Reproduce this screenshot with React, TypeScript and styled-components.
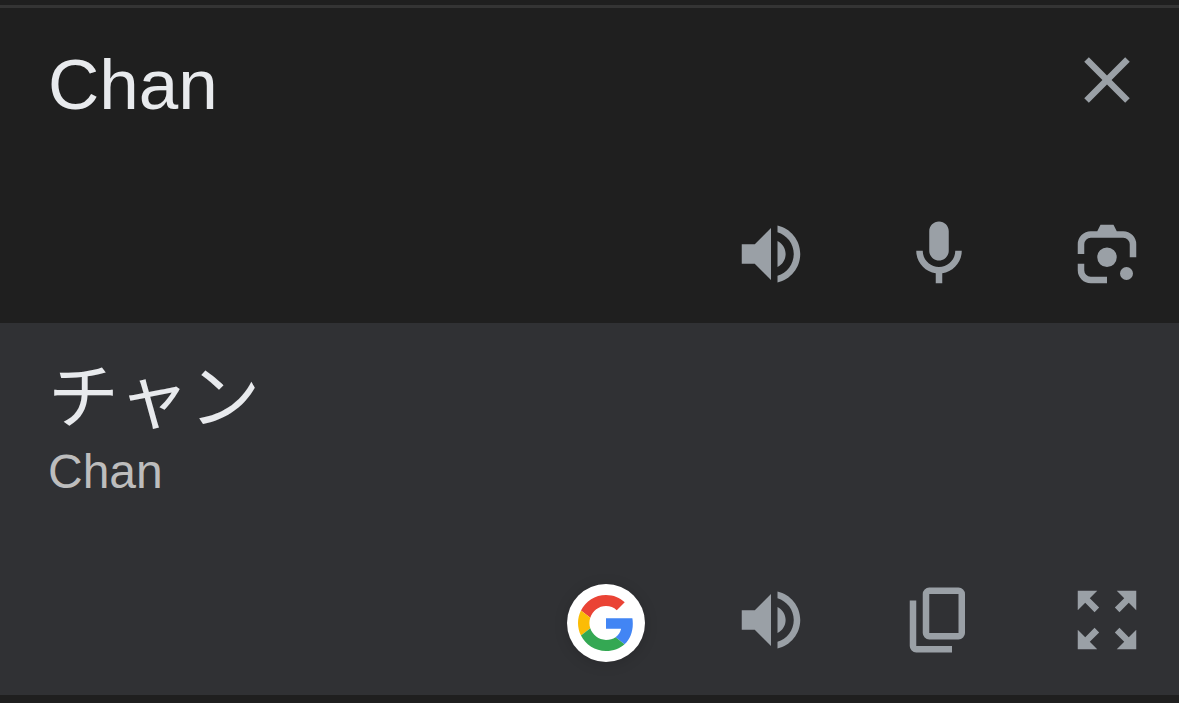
import React, { useState } from "react";
import styled, { createGlobalStyle } from "styled-components";

const GlobalStyle = createGlobalStyle`
  *, *::before, *::after { box-sizing: border-box; }
  body {
    margin: 0;
    background: #1f1f1f;
    font-family: "Liberation Sans", Arial, sans-serif;
  }
`;

const Page = styled.main`
  padding: 5px 0 8px;
`;

const SourcePanel = styled.section`
  display: flex;
  flex-direction: column;
  gap: 86px;
  padding: 33px 33px 30px 48px;
  border-top: 3px solid #343434;
`;

const ResultPanel = styled.section`
  display: flex;
  flex-direction: column;
  gap: 73px;
  padding: 20px 33px 33px 48px;
  background: #303134;
`;

const InputRow = styled.div`
  display: flex;
  align-items: flex-start;
  gap: 24px;
`;

const SourceInput = styled.input`
  flex: 1;
  min-width: 0;
  height: 88px;
  padding: 0;
  border: 0;
  outline: 0;
  background: transparent;
  color: #e8eaed;
  font: 71px/88px "Liberation Sans", Arial, sans-serif;
`;

const Toolbar = styled.div`
  display: flex;
  align-items: center;
  justify-content: flex-end;
  gap: 87px;
`;

const Actions = styled.div`
  display: flex;
  gap: 90px;
`;

const IconButton = styled.button`
  display: block;
  flex: none;
  width: 78px;
  height: 78px;
  padding: 0;
  border: 0;
  background: transparent;
  color: #9aa0a6;
  cursor: pointer;

  svg {
    display: block;
    width: 100%;
    height: 100%;
    fill: currentColor;
  }
`;

const BrandSlot = styled.div`
  padding-top: 6px;
`;

const BrandButton = styled(IconButton)`
  padding: 11px;
  border-radius: 50%;
  background: #fff;
  box-shadow: 0 2px 14px rgba(0, 0, 0, 0.15);
`;

const Translation = styled.p`
  margin: 0;
  color: #e8eaed;
  font: 71px/96px "Noto Sans CJK JP", sans-serif;
`;

const Romanization = styled.p`
  margin: 0;
  color: #bdbdbd;
  font-size: 48px;
  line-height: 66px;
`;

const icons = {
  close: "M19 6.41 17.59 5 12 10.59 6.41 5 5 6.41 10.59 12 5 17.59 6.41 19 12 13.41 17.59 19 19 17.59 13.41 12z",
  speaker:
    "M3 9v6h4l5 5V4L7 9H3zm13.5 3c0-1.77-1.02-3.29-2.5-4.03v8.05c1.48-.73 2.5-2.25 2.5-4.02zM14 3.23v2.06c2.89.86 5 3.54 5 6.71s-2.11 5.85-5 6.71v2.06c4.01-.91 7-4.49 7-8.77s-2.99-7.86-7-8.77z",
  mic: "M12 14c1.66 0 3-1.34 3-3V5c0-1.66-1.34-3-3-3S9 3.34 9 5v6c0 1.66 1.34 3 3 3zM17 11c0 2.76-2.24 5-5 5s-5-2.24-5-5H5c0 3.53 2.61 6.43 6 6.92V21h2v-3.08c3.39-.49 6-3.39 6-6.92h-2z",
  lens: "M3 12V9a4 4 0 0 1 4-4h2l1-2h4l1 2h2a4 4 0 0 1 4 4v4h-2V9a2 2 0 0 0-2-2H7a2 2 0 0 0-2 2v3zM3 15h2v2a2 2 0 0 0 2 2h5v2H7a4 4 0 0 1-4-4zM12 10a3 3 0 1 1 0 6 3 3 0 0 1 0-6zM18 16a2 2 0 1 1 0 4 2 2 0 0 1 0-4z",
  copy: "M18 2H9a2 2 0 0 0-2 2v12a2 2 0 0 0 2 2h9a2 2 0 0 0 2-2V4a2 2 0 0 0-2-2zm0 14H9V4h9zM3 6h2v14h11v2H5a2 2 0 0 1-2-2z",
  expand:
    "M15 3l2.3 2.3-2.89 2.87 1.42 1.42L18.7 6.7 21 9V3zM3 9l2.3-2.3 2.87 2.89 1.42-1.42L6.7 5.3 9 3H3zM9 21l-2.3-2.3 2.89-2.87-1.42-1.42L5.3 17.3 3 15v6zM21 15l-2.3 2.3-2.87-2.89-1.42 1.42 2.89 2.87L15 21h6z",
};

function Action({ icon, label, onClick }: { icon: keyof typeof icons; label: string; onClick?: () => void }) {
  return (
    <IconButton type="button" aria-label={label} onClick={onClick}>
      <svg viewBox="0 0 24 24" aria-hidden="true">
        <path d={icons[icon]} />
      </svg>
    </IconButton>
  );
}

function GoogleLogo() {
  return (
    <svg viewBox="0 0 48 48" aria-hidden="true">
      <path fill="#EA4335" d="M24 9.5c3.54 0 6.71 1.22 9.21 3.6l6.85-6.85C35.9 2.38 30.47 0 24 0 14.62 0 6.51 5.38 2.56 13.22l7.98 6.19C12.43 13.72 17.74 9.5 24 9.5z" />
      <path fill="#4285F4" d="M46.98 24.55c0-1.57-.15-3.09-.38-4.55H24v9.02h12.94c-.58 2.96-2.26 5.48-4.78 7.18l7.73 6c4.51-4.18 7.09-10.36 7.09-17.65z" />
      <path fill="#FBBC05" d="M10.53 28.59c-.48-1.45-.76-2.99-.76-4.59s.27-3.14.76-4.59l-7.98-6.19C.92 16.46 0 20.12 0 24c0 3.88.92 7.54 2.56 10.78l7.97-6.19z" />
      <path fill="#34A853" d="M24 48c6.48 0 11.93-2.13 15.89-5.81l-7.73-6c-2.15 1.45-4.92 2.3-8.16 2.3-6.26 0-11.57-4.22-13.47-9.91l-7.98 6.19C6.51 42.62 14.62 48 24 48z" />
    </svg>
  );
}

export default function App() {
  const [source, setSource] = useState("Chan");

  return (
    <>
      <GlobalStyle />
      <Page>
        <SourcePanel>
          <InputRow>
            <SourceInput aria-label="Source text" value={source} onChange={(e) => setSource(e.target.value)} />
            <Action icon="close" label="Clear text" onClick={() => setSource("")} />
          </InputRow>
          <Toolbar>
            <Actions>
              <Action icon="speaker" label="Listen to source" />
              <Action icon="mic" label="Speak" />
              <Action icon="lens" label="Translate with camera" />
            </Actions>
          </Toolbar>
        </SourcePanel>
        <ResultPanel>
          <div>
            <Translation lang="ja">チャン</Translation>
            <Romanization>Chan</Romanization>
          </div>
          <Toolbar>
            <BrandSlot>
              <BrandButton type="button" aria-label="Search with Google">
                <GoogleLogo />
              </BrandButton>
            </BrandSlot>
            <Actions>
              <Action icon="speaker" label="Listen to translation" />
              <Action icon="copy" label="Copy translation" />
              <Action icon="expand" label="Full screen" />
            </Actions>
          </Toolbar>
        </ResultPanel>
      </Page>
    </>
  );
}
